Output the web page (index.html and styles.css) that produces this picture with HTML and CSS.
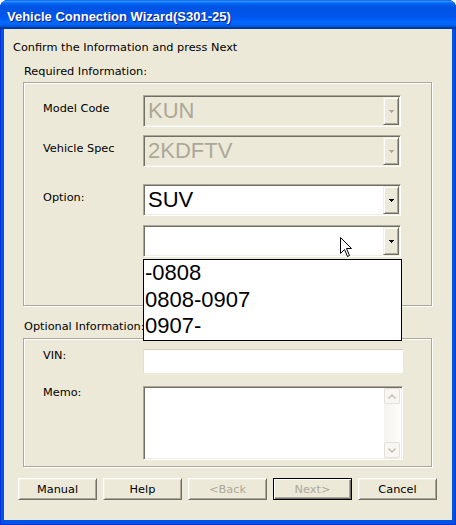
FILE: index.html
```html
<!DOCTYPE html>
<html>
<head>
<meta charset="utf-8">
<title>Vehicle Connection Wizard</title>
<link rel="stylesheet" href="styles.css">
</head>
<body>
<div class="window">
  <div class="titlebar"><span class="title">Vehicle Connection Wizard(S301-25)</span></div>
  <div class="client">
    <div class="prompt">Confirm the Information and press Next</div>
    <div class="legend legend-req">Required Information:</div>
    <div class="group group-req">
      <div class="row">
        <div class="label">Model Code</div>
        <div class="combo disabled"><span class="value">KUN</span><span class="drop"><svg width="5" height="3" viewBox="0 0 5 3" shape-rendering="crispEdges"><polygon points="0,0 5,0 2.5,3" fill="#ACA899"/></svg></span></div>
      </div>
      <div class="row r2">
        <div class="label">Vehicle Spec</div>
        <div class="combo disabled"><span class="value">2KDFTV</span><span class="drop"><svg width="5" height="3" viewBox="0 0 5 3" shape-rendering="crispEdges"><polygon points="0,0 5,0 2.5,3" fill="#ACA899"/></svg></span></div>
      </div>
      <div class="row r3">
        <div class="label">Option:</div>
        <div class="combo"><span class="value">SUV</span><span class="drop"><svg width="5" height="3" viewBox="0 0 5 3" shape-rendering="crispEdges"><polygon points="0,0 5,0 2.5,3" fill="#000"/></svg></span></div>
      </div>
      <div class="row r4">
        <div class="label"></div>
        <div class="combo"><span class="value"></span><span class="drop"><svg width="5" height="3" viewBox="0 0 5 3" shape-rendering="crispEdges"><polygon points="0,0 5,0 2.5,3" fill="#000"/></svg></span>
          <div class="list">
            <div class="item">-0808</div>
            <div class="item">0808-0907</div>
            <div class="item">0907-</div>
          </div>
        </div>
      </div>
    </div>
    <div class="legend legend-opt">Optional Information:</div>
    <div class="group group-opt">
      <div class="row">
        <div class="label">VIN:</div>
        <div class="edit vin"></div>
      </div>
      <div class="row r-memo">
        <div class="label">Memo:</div>
        <div class="edit memo">
          <div class="scrollbar">
            <div class="sbtn"><svg width="8" height="5" viewBox="0 0 8 5"><polyline points="0.5,4.5 4,1 7.5,4.5" fill="none" stroke="#C3C0B0" stroke-width="1.5"/></svg></div>
            <div class="sbtn"><svg width="8" height="5" viewBox="0 0 8 5"><polyline points="0.5,0.5 4,4 7.5,0.5" fill="none" stroke="#C3C0B0" stroke-width="1.5"/></svg></div>
          </div>
        </div>
      </div>
    </div>
    <div class="buttons">
      <button class="btn">Manual</button>
      <button class="btn">Help</button>
      <button class="btn" disabled>&lt;Back</button>
      <button class="btn default" disabled>Next&gt;</button>
      <button class="btn">Cancel</button>
    </div>
  </div>
  <svg class="cursor" width="13" height="21" viewBox="0 0 13 21"><path d="M0.5,0.5 L0.5,16.5 L4.5,12.5 L7.5,19.5 L9.5,18.5 L6.5,11.5 L11.5,11.5 Z" fill="#fff" stroke="#000" stroke-width="1" stroke-linejoin="miter"/></svg>
</div>
</body>
</html>
```

FILE: styles.css
```css
html, body {
  margin: 0;
  padding: 0;
  background: #ffffff;
}

.window {
  position: relative;
  width: 456px;
  height: 525px;
  display: flex;
  flex-direction: column;
  background: #0054E3;
  border-radius: 8px 8px 0 0;
  box-shadow: inset 0 0 0 1px #0831D9;
  font-family: "DejaVu Sans", sans-serif;
  font-size: 11.3px;
  color: #000;
}

.titlebar {
  height: 29px;
  flex: none;
  box-sizing: border-box;
  padding: 3px 0 0 7px;
  display: flex;
  align-items: center;
  border-radius: 8px 8px 0 0;
  background: linear-gradient(to bottom,
    #0058EE 0%, #3593FF 4%, #288EFF 6%, #127DFF 8%, #036FFC 10%,
    #0262EE 14%, #0057E5 20%, #0054E3 24%, #0055EB 56%, #005BF5 66%,
    #026AFE 76%, #0062EF 86%, #0052D6 92%, #0040AB 94%, #003092 100%);
}

.title {
  font-family: "Liberation Sans", Arial, sans-serif;
  font-weight: bold;
  font-size: 13px;
  color: #ffffff;
  text-shadow: 1px 1px 0 #0A1C8A;
}

.client {
  flex: 1;
  margin: 0 4px 5px 4px;
  background: #ECE9D8;
  display: flex;
  flex-direction: column;
}

.prompt {
  margin: 12px 0 0 9px;
  line-height: 14px;
}

.legend {
  margin-left: 20px;
  line-height: 14px;
}

.legend-req { margin-top: 10px; }
.legend-opt { margin-top: 14px; }

.group {
  margin-left: 19px;
  width: 409px;
  box-sizing: border-box;
  border: 1px solid #ACA899;
  box-shadow: 1px 1px 0 #ffffff, inset 1px 1px 0 #ffffff;
  padding-left: 19px;
}

.group-req {
  margin-top: 3px;
  padding-top: 12px;
  padding-bottom: 48px;
}

.group-opt {
  margin-top: 4px;
  padding-top: 10px;
  padding-bottom: 6px;
}

.row {
  display: flex;
}

.r2 { margin-top: 8px; }
.r3 { margin-top: 17px; }
.r4 { margin-top: 9px; }
.r-memo { margin-top: 13px; }

.label {
  width: 100px;
  flex: none;
  line-height: 14px;
}

.group-req .label {
  padding-top: 7px;
}

.combo {
  position: relative;
  width: 258px;
  height: 32px;
  box-sizing: border-box;
  padding: 1px;
  border: 1px solid;
  border-color: #ACA899 #ffffff #ffffff #ACA899;
  box-shadow: inset 1px 1px 0 #716F64, inset -1px -1px 0 #F1EFE2;
  background: #ffffff;
  display: flex;
}

.combo.disabled {
  background: #ECE9D8;
  color: #ACA899;
}

.value {
  flex: 1;
  padding-left: 3px;
  font-family: "Liberation Sans", Arial, sans-serif;
  font-size: 22px;
  line-height: 28px;
}

.drop {
  width: 16px;
  flex: none;
  box-sizing: border-box;
  background: #ECE9D8;
  border: 1px solid;
  border-color: #F1EFE2 #716F64 #716F64 #F1EFE2;
  box-shadow: inset 1px 1px 0 #ffffff, inset -1px -1px 0 #ACA899;
  display: flex;
  align-items: center;
  justify-content: center;
}

.drop svg {
  display: block;
}

.list {
  position: absolute;
  left: -1px;
  top: 33px;
  width: 259px;
  box-sizing: border-box;
  border: 1px solid #000000;
  background: #ffffff;
  z-index: 2;
}

.item {
  padding-left: 1px;
  font-family: "Liberation Sans", Arial, sans-serif;
  font-size: 22px;
  line-height: 26.67px;
  color: #000;
}

.edit {
  width: 260px;
  box-sizing: border-box;
  background: #ffffff;
}

.vin {
  height: 24px;
  border-top: 1px solid #D2CFC0;
  border-left: 1px solid #E4E1D4;
}

.memo {
  height: 74px;
  padding: 1px 2px 1px 1px;
  border: 1px solid;
  border-color: #ACA899 #ffffff #ffffff #ACA899;
  box-shadow: inset 1px 1px 0 #716F64, inset -1px -1px 0 #F1EFE2;
  display: flex;
  justify-content: flex-end;
}

.scrollbar {
  width: 16px;
  display: flex;
  flex-direction: column;
  justify-content: space-between;
  background: linear-gradient(to right, #F4F3EE, #FDFDFB);
}

.sbtn {
  height: 16px;
  box-sizing: border-box;
  border: 1px solid #E3E1D8;
  border-radius: 2px;
  background: #F7F6F2;
  display: flex;
  align-items: center;
  justify-content: center;
}

.sbtn svg {
  display: block;
}

.buttons {
  margin: 11px 0 0 14px;
  display: flex;
  gap: 6px;
}

.btn {
  width: 79px;
  height: 22px;
  margin: 0;
  padding: 0;
  box-sizing: border-box;
  font-family: "DejaVu Sans", sans-serif;
  font-size: 11.3px;
  color: #000;
  background: #ECE9D8;
  border: 1px solid;
  border-color: #ffffff #716F64 #716F64 #ffffff;
  box-shadow: inset 1px 1px 0 #F1EFE2, inset -1px -1px 0 #ACA899;
  border-radius: 0;
}

.btn:disabled {
  color: #ACA899;
}

.btn.default {
  border: 1px solid #000000;
  box-shadow: inset 1px 1px 0 #ffffff, inset -1px -1px 0 #716F64, inset -2px -2px 0 #ACA899;
}

.cursor {
  position: absolute;
  left: 340px;
  top: 237px;
  z-index: 3;
}
```
